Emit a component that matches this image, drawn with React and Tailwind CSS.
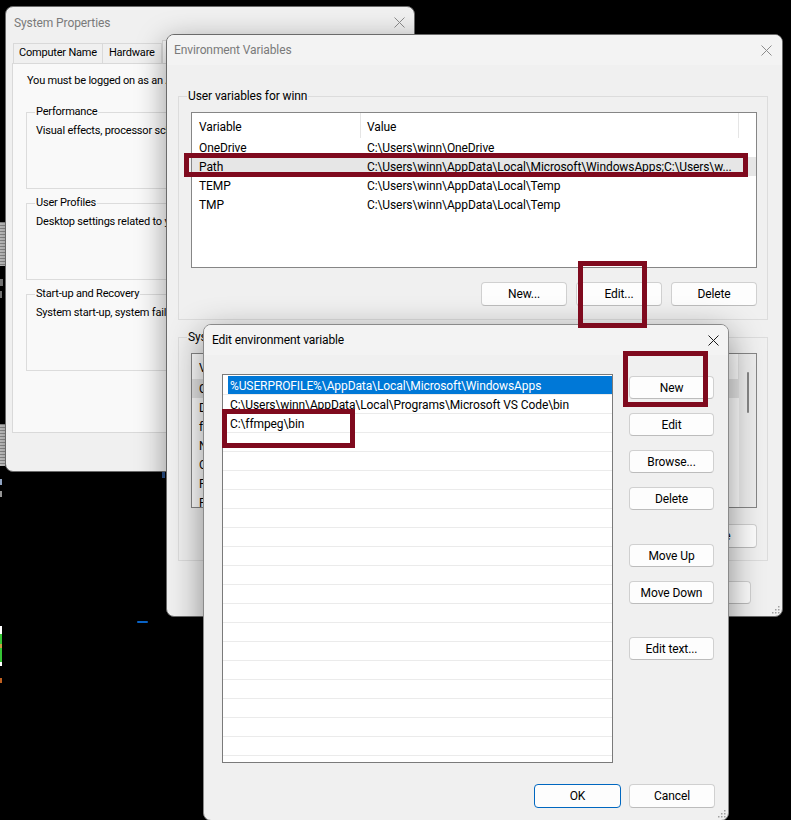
import React from "react";

function CloseX({ color }) {
  return (
    <svg width="11" height="11" viewBox="0 0 11 11">
      <path d="M0.5 0.5L10.5 10.5M10.5 0.5L0.5 10.5" stroke={color} strokeWidth="1" />
    </svg>
  );
}

function Grip() {
  return (
    <svg width="9" height="9" viewBox="0 0 9 9">
      <g fill="#a0a0a0">
        <rect x="7" y="1" width="1.5" height="1.5" />
        <rect x="4" y="4" width="1.5" height="1.5" />
        <rect x="7" y="4" width="1.5" height="1.5" />
        <rect x="1" y="7" width="1.5" height="1.5" />
        <rect x="4" y="7" width="1.5" height="1.5" />
        <rect x="7" y="7" width="1.5" height="1.5" />
      </g>
    </svg>
  );
}

function Btn({ children, className = "", primary = false }) {
  return (
    <div
      className={`flex shrink-0 items-center justify-center rounded-[4px] border bg-[#fdfdfd] text-[12px] text-black ${
        primary ? "border-[#0067c0]" : "border-[#d0d0d0] border-b-[#bcbcbc]"
      } ${className}`}
    >
      {children}
    </div>
  );
}

function Group({ label, className = "", legendClass = "text-[12px]", children }) {
  return (
    <fieldset className={`border border-[#dcdcdc] ${className}`}>
      <legend className={`h-[16px] px-[1px] leading-[16px] text-black ${legendClass}`}>{label}</legend>
      {children}
    </fieldset>
  );
}

const userRows = [
  ["OneDrive", "C:\\Users\\winn\\OneDrive", false],
  ["Path", "C:\\Users\\winn\\AppData\\Local\\Microsoft\\WindowsApps;C:\\Users\\w...", true],
  ["TEMP", "C:\\Users\\winn\\AppData\\Local\\Temp", false],
  ["TMP", "C:\\Users\\winn\\AppData\\Local\\Temp", false],
];

const sysRows = [
  ["ComSpec", "C:\\WINDOWS\\system32\\cmd.exe", true],
  ["DriverData", "C:\\Windows\\System32\\Drivers\\DriverData", false],
  ["ffmpeg", "C:\\ffmpeg\\bin", false],
  ["NUMBER_OF_PROCESSORS", "8", false],
  ["OS", "Windows_NT", false],
  ["Path", "C:\\WINDOWS\\system32;C:\\WINDOWS", false],
  ["PATHEXT", ".COM;.EXE;.BAT;.CMD;.VBS", false],
];

const editRows = [
  "%USERPROFILE%\\AppData\\Local\\Microsoft\\WindowsApps",
  "C:\\Users\\winn\\AppData\\Local\\Programs\\Microsoft VS Code\\bin",
  "C:\\ffmpeg\\bin",
];

function VarList({ rows, heightClass, scrollbar }) {
  return (
    <div className={`flex w-[566px] overflow-hidden border border-[#868686] bg-white ${heightClass}`}>
      <div className="flex min-w-0 flex-1 flex-col">
        <div className="flex h-[25px] shrink-0 text-[12px] text-black">
          <div className="flex h-full w-[169px] shrink-0 items-center border-r border-[#e5e5e5] pl-[7px] pt-[2px]">Variable</div>
          <div className="flex h-full w-[378px] shrink-0 items-center border-r border-[#e5e5e5] pl-[6px] pt-[2px]">Value</div>
        </div>
        {rows.map(([k, v, hl]) => (
          <div
            key={k + v}
            className={`flex h-[19px] shrink-0 items-center whitespace-nowrap text-[12px] text-black ${
              hl ? "bg-[#e6e6e6]" : "bg-white"
            }`}
          >
            <div className="w-[169px] shrink-0 overflow-hidden pl-[7px]">{k}</div>
            <div className="w-[378px] shrink-0 overflow-hidden pl-[6px]">{v}</div>
          </div>
        ))}
      </div>
      {scrollbar && (
        <div className="flex w-[17px] shrink-0 justify-center bg-[#eeeeee] pt-[18px]">
          <div className="h-[41px] w-[2px] rounded-full bg-[#868686]" />
        </div>
      )}
    </div>
  );
}

export default function App() {
  return (
    <div className="relative h-[820px] w-[791px] overflow-hidden bg-black font-[Roboto,'Segoe_UI',sans-serif] tracking-[-0.1px]">
      {/* desktop fragments on the left edge */}
      <div className="absolute left-0 top-[222px] h-[44px] w-[5px] bg-[repeating-linear-gradient(180deg,#9a9a9a_0px,#9a9a9a_1px,#dadada_1px,#dadada_3px)]" />
      <div className="absolute left-0 top-[424px] h-[42px] w-[5px] bg-[repeating-linear-gradient(180deg,#9a9a9a_0px,#9a9a9a_1px,#dadada_1px,#dadada_3px)]" />
      <div className="absolute left-0 top-[279px] h-[7px] w-[3px] bg-[#8a8a8a]" />
      <div className="absolute left-0 top-[291px] h-[7px] w-[2px] bg-[#8a8a8a]" />
      <div className="absolute left-0 top-[479px] h-[6px] w-[2px] bg-[#9bb0d0]" />
      <div className="absolute left-0 top-[491px] h-[6px] w-[2px] bg-[#9a9a9a]" />
      <div className="absolute left-0 top-[626px] h-[40px] w-[2px] bg-[linear-gradient(180deg,#ffffff_0%,#ffffff_20%,#35c435_20%,#35c435_45%,#c8a040_45%,#c8a040_55%,#35c435_55%,#35c435_90%,#ffffff_90%)]" />
      <div className="absolute left-0 top-[678px] h-[5px] w-[2px] bg-[#c06020]" />
      <div className="absolute left-[137px] top-[621px] h-[2px] w-[11px] rounded-full bg-[#0a64c8]" />
      <div className="absolute left-[162px] top-[472px] h-[6px] w-[3px] bg-[#3a70c0]" />

      {/* System Properties */}
      <div className="absolute left-[5px] top-[6px] flex h-[466px] w-[410px] flex-col overflow-hidden rounded-[8px] border border-[#6a6a6a] bg-[#f0f0f0] shadow-[0_8px_28px_rgba(0,0,0,0.45)]">
        <div className="flex h-[31px] shrink-0 items-center justify-between pl-[8px] pr-[9px]">
          <span className="text-[12px] text-[#7a7a7a]">System Properties</span>
          <CloseX color="#8c8c8c" />
        </div>
        <div className="flex h-[25px] shrink-0 items-end pl-[7px] text-[11px] tracking-[-0.2px] text-black">
          <div className="flex h-[20px] items-center border border-b-0 border-[#d9d9d9] px-[5px]">Computer Name</div>
          <div className="flex h-[20px] items-center border border-b-0 border-l-0 border-[#d9d9d9] px-[6px]">Hardware</div>
          <div className="flex h-[23px] items-center border border-b-0 border-[#d9d9d9] bg-[#f9f9f9] px-[6px]">Advanced</div>
          <div className="flex h-[20px] items-center border border-b-0 border-l-0 border-[#d9d9d9] px-[6px]">System Protection</div>
        </div>
        <div className="mx-[6px] flex h-[370px] shrink-0 flex-col border border-[#d9d9d9] bg-[#f9f9f9] pl-[13px] pr-[12px] pt-[9px] text-[11px] tracking-[-0.2px] text-black">
          <div className="h-[16px] whitespace-nowrap pl-[1px] leading-[16px]">
            You must be logged on as an Administrator to make most of these changes.
          </div>
          <Group label="Performance" legendClass="text-[11px]" className="mt-[15px] h-[85px] pl-[8px]">
            <div className="mt-[3px] whitespace-nowrap pl-[1px] leading-[16px]">
              Visual effects, processor scheduling, memory usage and virtual memory
            </div>
          </Group>
          <Group label="User Profiles" legendClass="text-[11px]" className="mt-[6px] h-[85px] pl-[8px]">
            <div className="mt-[3px] whitespace-nowrap pl-[1px] leading-[16px]">Desktop settings related to your sign-in</div>
          </Group>
          <Group label="Start-up and Recovery" legendClass="text-[11px]" className="mt-[6px] h-[85px] pl-[8px]">
            <div className="mt-[3px] whitespace-nowrap pl-[1px] leading-[16px]">
              System start-up, system failure and debugging information
            </div>
          </Group>
        </div>
      </div>

      {/* Environment Variables */}
      <div className="absolute left-[166px] top-[34px] flex h-[583px] w-[617px] flex-col overflow-hidden rounded-[8px] border border-[#6a6a6a] bg-[#f0f0f0] shadow-[0_8px_30px_rgba(0,0,0,0.4)]">
        <div className="flex h-[30px] shrink-0 items-center justify-between bg-[#f3f3f3] pl-[7px] pr-[10px]">
          <span className="text-[12px] text-[#7a7a7a]">Environment Variables</span>
          <CloseX color="#8c8c8c" />
        </div>
        <div className="flex flex-col pl-[11px] pr-[14px]">
          <Group label="User variables for winn" className="mt-[23px] pb-[13px] pl-[8px] pr-[10px]">
            <div className="ml-[4px] flex flex-col">
              <div className="mt-[8px]">
                <VarList rows={userRows} heightClass="h-[156px]" />
              </div>
              <div className="mt-[14px] flex justify-end gap-[9px]">
                <Btn className="h-[24px] w-[86px]">New...</Btn>
                <Btn className="h-[24px] w-[86px]">Edit...</Btn>
                <Btn className="h-[24px] w-[86px]">Delete</Btn>
              </div>
            </div>
          </Group>
          <Group label="System variables" className="mt-[9px] pb-[12px] pl-[8px] pr-[10px]">
            <div className="ml-[4px] flex flex-col">
              <div className="mt-[8px]">
                <VarList rows={sysRows} heightClass="h-[155px]" scrollbar />
              </div>
              <div className="mt-[16px] flex justify-end gap-[9px]">
                <Btn className="h-[24px] w-[86px]">New...</Btn>
                <Btn className="h-[24px] w-[86px]">Edit...</Btn>
                <Btn className="h-[24px] w-[86px]">Delete</Btn>
              </div>
            </div>
          </Group>
          <div className="mt-[20px] flex justify-end gap-[8px] pr-[17px]">
            <Btn className="h-[23px] w-[86px]">OK</Btn>
            <Btn className="h-[23px] w-[86px]">Cancel</Btn>
          </div>
        </div>
        <div className="absolute bottom-[2px] right-[2px]">
          <Grip />
        </div>
      </div>

      {/* Edit environment variable */}
      <div className="absolute left-[203px] top-[324px] flex h-[497px] w-[526px] flex-col overflow-hidden rounded-[8px] border border-[#8a8a8a] bg-[#f0f0f0] shadow-[0_10px_34px_rgba(0,0,0,0.45)]">
        <div className="flex h-[30px] shrink-0 items-center justify-between bg-[#f3f3f3] pl-[8px] pr-[9px]">
          <span className="text-[12px] text-black">Edit environment variable</span>
          <CloseX color="#1a1a1a" />
        </div>
        <div className="flex pl-[18px] pr-[14px] pt-[19px]">
          <div className="flex h-[389px] w-[391px] shrink-0 flex-col overflow-hidden border border-[#7a7a7a] bg-white pt-[1px]">
            {Array.from({ length: 21 }).map((_, i) => (
              <div key={i} className="flex h-[19px] shrink-0 border-b border-[#ebebeb]">
                <div
                  className={`flex flex-1 items-center whitespace-nowrap pl-[2px] pt-[1px] text-[12px] ${
                    i === 0 ? "ml-[5px] bg-[#0078d7] text-white" : "ml-[5px] text-black"
                  }`}
                >
                  {editRows[i] || ""}
                </div>
              </div>
            ))}
          </div>
          <div className="ml-[16px] flex w-[85px] flex-col pt-[2px]">
            <Btn className="h-[23px] w-[85px]">New</Btn>
            <Btn className="mt-[14px] h-[23px] w-[85px]">Edit</Btn>
            <Btn className="mt-[14px] h-[23px] w-[85px]">Browse...</Btn>
            <Btn className="mt-[14px] h-[23px] w-[85px]">Delete</Btn>
            <Btn className="mt-[34px] h-[23px] w-[85px]">Move Up</Btn>
            <Btn className="mt-[14px] h-[23px] w-[85px]">Move Down</Btn>
            <Btn className="mt-[33px] h-[23px] w-[85px]">Edit text...</Btn>
          </div>
        </div>
        <div className="mt-[21px] flex justify-end gap-[8px] pr-[13px]">
          <Btn primary className="h-[24px] w-[87px]">OK</Btn>
          <Btn className="h-[24px] w-[86px]">Cancel</Btn>
        </div>
        <div className="absolute bottom-[2px] right-[2px]">
          <Grip />
        </div>
      </div>

      {/* red annotation boxes */}
      <div className="absolute left-[184px] top-[153px] h-[24px] w-[564px] border-[5px] border-[#7f0a1e]" />
      <div className="absolute left-[578px] top-[261px] h-[67px] w-[69px] border-[5px] border-[#7f0a1e]" />
      <div className="absolute left-[623px] top-[351px] h-[56px] w-[85px] border-[5px] border-[#7f0a1e]" />
      <div className="absolute left-[222px] top-[409px] h-[39px] w-[133px] border-[5px] border-[#7f0a1e]" />
    </div>
  );
}
